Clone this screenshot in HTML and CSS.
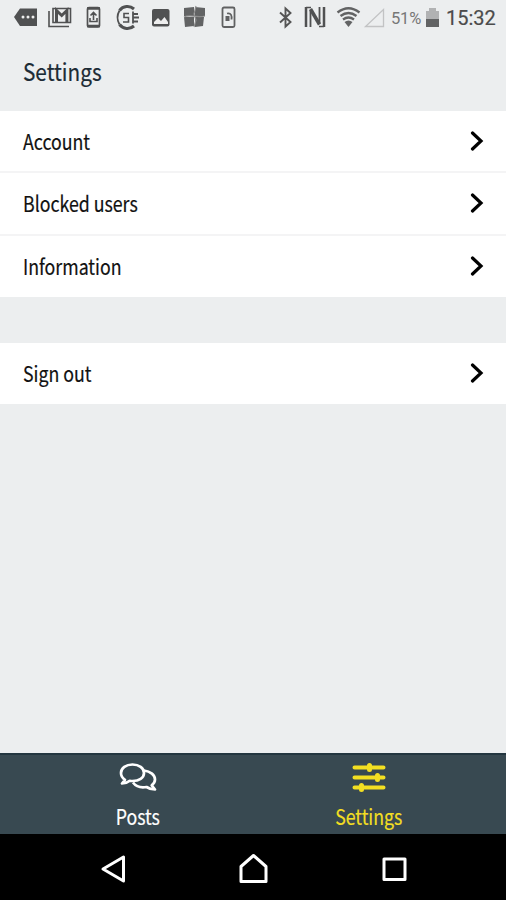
FILE: index.html
```
<!DOCTYPE html>
<html lang="en">
<head>
<meta charset="utf-8">
<title>Settings</title>
<link rel="stylesheet" href="styles.css">
</head>
<body>
<div class="screen">
  <div class="status">
    <svg class="status-icons" width="386" height="36" viewBox="0 0 386 36">
      <path d="M14 17l6-8.500h17v17.500H20z" fill="#505152"/>
      <g fill="#eee"><circle cx="23" cy="17" r="1.500"/><circle cx="28" cy="17" r="1.500"/><circle cx="33" cy="17" r="1.500"/></g>
      <g fill="none" stroke="#505152" stroke-width="2">
        <path d="M49 11v15.500h20" stroke-width="1.600"/>
        <path d="M53 8.500h17.500v14H53z" stroke-width="1.600"/>
        <path d="M56.500 22V10.500l5.200 5 5.200-5V22" stroke-width="3"/>
        <rect x="87.500" y="7.500" width="12" height="19.500" rx="1.500" stroke-width="1.700"/>
        <path d="M87 8.500h13M87 26h13" stroke-width="2.500"/>
        <path d="M93.500 20v-7M90.500 15.500l3-3 3 3M90 18v3.500h7V18" stroke-width="1.600"/>
        <path d="M134 9a10 10 0 0 0-14.500 1.500M134 26a10 10 0 0 1-14.500-1.500" stroke-width="3"/>
        <path d="M119.500 10.500q-4 7 0 14M133 11.500v12M133 14h5M133 17.500h6M133 21.500h5" stroke-width="1.800"/>
        <path d="M129 13.500h-5v4h4.500V22h-5.500" stroke-width="1.600"/>
      </g>
      <rect x="152" y="9" width="17.500" height="17.500" rx="2" fill="#505152"/>
      <path d="M154 24v-2l4-4 3 3 3.500-4 3.500 5v2z" fill="#eee"/>
      <path d="M184 8l10-1v9h-10zM195 7l10 1v8h-10zM184 17h10v9l-9 1zM195 17h9l-1 9-8 1z" fill="#626364"/>
      <path d="M196 6l-2 8 2 6-2 7M184 17c6-3 12 1 21-1" fill="none" stroke="#8d8d8d" stroke-width="1.200"/>
      <rect x="222.500" y="7.500" width="12" height="19.500" rx="1.500" fill="none" stroke="#606162" stroke-width="1.800"/>
      <path d="M225.500 16h4v5h-4z" fill="#606162"/>
      <path d="M227 13.500c4-1 5 2 4.500 6" fill="none" stroke="#606162" stroke-width="1.800"/>
      <path d="M280 12.500l10.500 9.500-5 4.500v-18l5 4.500-10.500 9.500" fill="none" stroke="#555" stroke-width="1.900"/>
      <g fill="none" stroke="#505152"><path d="M306 7v20M324 7v20" stroke-width="2.500"/><path d="M310.500 27V10.500M319.500 7v16" stroke-width="1.800"/><path d="M310.500 9l9 15.500" stroke-width="3.500"/><path d="M306 7.500h5M319 26.500h5" stroke-width="1.500"/></g>
      <g fill="none" stroke="#626364" stroke-width="2.300"><path d="M337.500 12.500q11-8.500 22 0M340.500 16q8-6 16 0M343 19.500q5.500-4 11 0"/></g>
      <path d="M344.500 22q4-3 8 0l-4 5z" fill="#626364"/>
      <path d="M365.500 26.500h18V9.500z" fill="none" stroke="#c2c3c4" stroke-width="1.300"/>
    </svg>
    <span class="percent">51%</span>
    <svg class="battery" width="14" height="20" viewBox="0 0 14 20"><path d="M0 3h3V0h7v3h3v8H0z" fill="#b1b2b3"/><path d="M0 11h13v8H0z" fill="#626364"/></svg>
    <span class="clock">15:32</span>
  </div>
  <header class="title"><span class="label label-title">Settings</span></header>
  <main>
    <div class="group">
      <div class="row"><span class="label">Account</span><svg class="chevron" width="14" height="20" viewBox="0 0 14 20"><path d="M2.500 2l8.500 8-8.500 8"/></svg></div>
      <div class="row"><span class="label">Blocked users</span><svg class="chevron" width="14" height="20" viewBox="0 0 14 20"><path d="M2.500 2l8.500 8-8.500 8"/></svg></div>
      <div class="row"><span class="label">Information</span><svg class="chevron" width="14" height="20" viewBox="0 0 14 20"><path d="M2.500 2l8.500 8-8.500 8"/></svg></div>
    </div>
    <div class="group">
      <div class="row row-single"><span class="label">Sign out</span><svg class="chevron" width="14" height="20" viewBox="0 0 14 20"><path d="M2.500 2l8.500 8-8.500 8"/></svg></div>
    </div>
  </main>
  <nav class="tabs">
    <div class="tab tab-posts">
      <svg width="40" height="32" viewBox="0 0 40 32" fill="none" stroke="#fff" stroke-width="2.700" stroke-linejoin="round"><path d="M14.500 3.500C8 3.500 3 7 3 12c0 3 1.500 5.200 4 6.800L4 22.500c3.500 0 6-1.200 7.800-2.700 1 .2 1.800.2 2.700.2C21 20 26 17 26 12S21 3.500 14.500 3.500z"/><path d="M26 9.500c6.500.8 11 4.500 11 9 0 2.300-1.300 4.300-3.300 5.800l3.300 4.200c-4 0-6.500-1.200-8.500-2.500-5.500 1-10.500-.5-13.500-4.500"/></svg>
      <span class="label">Posts</span>
    </div>
    <div class="tab tab-settings">
      <svg width="40" height="32" viewBox="0 0 40 32" fill="none" stroke="#f3df22" stroke-linecap="round"><path d="M5.500 6.500h29M5.500 16.500h29M5.500 26.500h29" stroke-width="4"/><path d="M20.500 4.500v4M28.500 14.500v4M12.500 24.500v4" stroke-width="5"/></svg>
      <span class="label">Settings</span>
    </div>
  </nav>
  <div class="system">
    <svg width="506" height="66" viewBox="0 0 506 66" fill="none" stroke="#fff" stroke-width="3" stroke-linejoin="round"><path d="M123.500 23v24L103 35z"/><path d="M241 32.500l12.500-11 12.500 11V47.500h-25z"/><rect x="384" y="25" width="21" height="20.500"/></svg>
  </div>
</div>
</body>
</html>
```
FILE: styles.css
```
body { margin: 0; }
.screen {
  width: 506px; height: 900px; display: flex; flex-direction: column;
  background: #eceeef; color: #111;
  font-family: "Noto Sans CJK SC", "Open Sans", sans-serif; font-size: 21.5px;
}
.status { height: 36px; display: flex; align-items: center; font-family: Roboto, sans-serif; white-space: nowrap; }
.status-icons { flex: none; }
.percent { width: 34px; margin-left: 5px; font-size: 16.5px; color: #777; letter-spacing: -.2px; }
.battery { flex: none; margin-left: 1px; }
.clock { margin-left: 6px; font-size: 20px; color: #4b4b4b; -webkit-text-stroke: .2px; }
.title { height: 75px; box-sizing: border-box; padding: 0 23px 5px; display: flex; align-items: center; }
.label { display: inline-block; line-height: 30px; transform: scaleX(.825); transform-origin: left center; white-space: nowrap; -webkit-text-stroke: .2px; }
.label-title { font-size: 24px; color: #1c2b35; transform: scaleX(.865); }
main { flex: 1; display: flex; flex-direction: column; gap: 46px; }
.row {
  height: 62.330px; box-sizing: border-box; padding: 0 22px 0 23px;
  display: flex; align-items: center; justify-content: space-between;
  background: #fff; border-bottom: 2px solid #f4f4f5;
}
.row-single, .row:last-child { height: 61.340px; border-bottom: 0; }
.row-single { padding-bottom: 2px; }
.chevron { fill: none; stroke: #000; stroke-width: 3.200; stroke-linecap: round; }
.tabs { height: 81px; display: flex; box-sizing: border-box; border-top: 2px solid #233640; background: #384951; color: #fff; justify-content: space-between; padding: 6px 117px 0 118px; }
.tab { width: 40px; display: flex; flex-direction: column; align-items: center; }
.tab svg { flex: none; }
.tab .label { transform-origin: center; margin-top: 8px; }
.tab-settings { color: #f3df22; }
.system { height: 66px; background: #000; }
```
